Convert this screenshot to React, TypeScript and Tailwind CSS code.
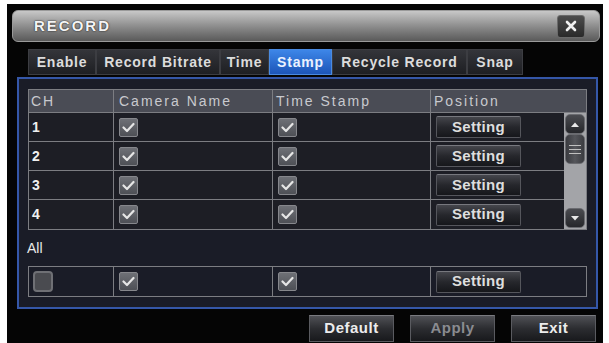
import React from "react";

const font = { fontFamily: '"Liberation Sans", Arial, sans-serif' };

const tabs = ["Enable", "Record Bitrate", "Time", "Stamp", "Recycle Record", "Snap"];
const tabWidths = ["w-[68px]", "w-[124px]", "w-[49px]", "w-[63px]", "w-[135px]", "w-[56px]"];

const Check = ({ on = true }: { on?: boolean }) =>
  on ? (
    <div className="w-[19px] h-[19px] rounded-[2px] border border-[#86878c] bg-gradient-to-b from-[#6e7076] to-[#4e5056] flex items-center justify-center">
      <svg width="13" height="11" viewBox="0 0 13 11">
        <path d="M1.5 5.5 L5 9 L11.5 2" fill="none" stroke="#e6e6e6" strokeWidth="2.2" strokeLinecap="round" strokeLinejoin="round" />
      </svg>
    </div>
  ) : (
    <div className="w-[20px] h-[21px] rounded-[4px] border-2 border-[#6f7075] bg-[#4a4b50]" />
  );

const SettingBtn = () => (
  <div className="w-[85px] h-[22px] rounded-[2px] border border-[#55565c] border-t-[#77787e] bg-gradient-to-b from-[#45464c] via-[#26272c] to-[#16171b] flex items-center justify-center text-[15px] font-bold text-[#dedede] tracking-[0.3px]">
    Setting
  </div>
);

const Arrow = ({ up }: { up?: boolean }) => (
  <div className="w-[20px] h-[20px] rounded-[5px] bg-gradient-to-b from-[#4a4b50] to-[#26272b] border border-[#6a6b70] flex items-center justify-center">
    <svg width="10" height="7" viewBox="0 0 10 7">
      <path d={up ? "M1 6 L5 1.5 L9 6 Z" : "M1 1 L5 5.5 L9 1 Z"} fill="#e8e8e8" />
    </svg>
  </div>
);

const BottomBtn = ({ label, dim }: { label: string; dim?: boolean }) => (
  <div
    className={`w-[85px] h-[27px] border border-[#5a5b60] border-t-[#7a7b80] bg-gradient-to-b from-[#505156] via-[#2c2d31] to-[#18191c] flex items-center justify-center text-[15px] font-bold tracking-[0.5px] ${
      dim ? "text-[#8a8b90]" : "text-[#ececec]"
    }`}
  >
    {label}
  </div>
);

export default function App() {
  return (
    <div className="w-[609px] h-[343px] bg-white pl-[7px] pr-[6px] pt-[4px] overflow-hidden" style={font}>
      <div className="w-[596px] h-[339px] bg-[#050505] flex flex-col">
        {/* Title bar */}
        <div className="mt-[6px] ml-[5px] mr-[3px] h-[32px] rounded-[6px] bg-gradient-to-b from-[#c8c8c8] via-[#8e8e8e] to-[#5a5a5a] border border-[#9a9a9a] flex items-center justify-between pl-[21px] pr-[14px]">
          <span
            className="text-[15px] font-bold tracking-[2px] text-[#f4f4f4]"
            style={{ textShadow: "0 0 1px #222, 0 0 2px #333" }}
          >
            RECORD
          </span>
          <div className="w-[28px] h-[23px] rounded-[3px] bg-gradient-to-b from-[#4c4c4c] to-[#2a2a2a] border border-[#6a6a6a] flex items-center justify-center">
            <svg width="12" height="12" viewBox="0 0 12 12">
              <path d="M2 2 L10 10 M10 2 L2 10" stroke="#f0f0f0" strokeWidth="2.6" strokeLinecap="round" />
            </svg>
          </div>
        </div>

        {/* Tabs */}
        <div className="mt-[7px] ml-[21px] flex h-[26px]">
          {tabs.map((t, i) => (
            <div
              key={t}
              className={`${tabWidths[i]} h-full flex items-center justify-center text-[14px] font-bold tracking-[0.8px] border border-[#3c3d42] ${
                t === "Stamp"
                  ? "bg-gradient-to-b from-[#3d86e8] to-[#1d55b8] text-[#eaf2ff] border-[#4a8ae0]"
                  : "bg-gradient-to-b from-[#34353a] to-[#1e1f23] text-[#dcdcdc]"
              }`}
            >
              {t}
            </div>
          ))}
        </div>

        {/* Panel */}
        <div className="mt-[2px] ml-[10px] mr-[5px] h-[232px] border-2 border-[#3557a8] bg-[#1a1c27] pl-[9px] pt-[10px]">
          <div className="w-[559px] border border-[#7c7d82]">
            {/* Header */}
            <div className="flex h-[23px] bg-[#4a4c55] text-[14px] tracking-[2px] text-[#c8c9ce] border-b border-[#7c7d82]">
              <div className="w-[85px] pl-[2px] flex items-center border-r border-[#7c7d82]">CH</div>
              <div className="w-[159px] pl-[5px] flex items-center border-r border-[#7c7d82]">Camera Name</div>
              <div className="w-[158px] pl-[3px] flex items-center border-r border-[#7c7d82]">Time Stamp</div>
              <div className="flex-1 pl-[3px] flex items-center">Position</div>
            </div>
            {/* Body */}
            <div className="flex">
              <div className="w-[535px]">
                {[1, 2, 3, 4].map((n) => (
                  <div key={n} className={`flex h-[29px] bg-[#1d1e25] ${n < 4 ? "border-b border-[#7c7d82]" : ""}`}>
                    <div className="w-[85px] pl-[3px] flex items-center border-r border-[#7c7d82] text-[14px] font-bold text-[#f0f0f0]">
                      {n}
                    </div>
                    <div className="w-[159px] pl-[5px] flex items-center border-r border-[#7c7d82]">
                      <Check />
                    </div>
                    <div className="w-[158px] pl-[5px] flex items-center border-r border-[#7c7d82]">
                      <Check />
                    </div>
                    <div className="flex-1 pl-[5px] flex items-center">
                      <SettingBtn />
                    </div>
                  </div>
                ))}
              </div>
              {/* Scrollbar */}
              <div className="w-[22px] bg-[#a3a4a8] flex flex-col justify-between items-center py-[1px]">
                <div className="flex flex-col items-center">
                  <Arrow up />
                  <div className="w-[20px] h-[30px] rounded-[5px] bg-gradient-to-r from-[#3a3b40] via-[#55565b] to-[#3a3b40] border border-[#6a6b70] flex flex-col items-center justify-center gap-[3px]">
                    <div className="w-[12px] h-[1px] bg-[#c0c0c0]" />
                    <div className="w-[12px] h-[1px] bg-[#c0c0c0]" />
                    <div className="w-[12px] h-[1px] bg-[#c0c0c0]" />
                  </div>
                </div>
                <Arrow />
              </div>
            </div>
          </div>

          <div className="mt-[11px] ml-[-1px] text-[14px] text-[#e8e8e8] leading-none">All</div>

          <div className="mt-[11px] w-[559px] h-[31px] border border-[#7c7d82] flex">
            <div className="w-[85px] pl-[4px] flex items-center border-r border-[#7c7d82]">
              <Check on={false} />
            </div>
            <div className="w-[159px] pl-[5px] flex items-center border-r border-[#7c7d82]">
              <Check />
            </div>
            <div className="w-[158px] pl-[5px] flex items-center border-r border-[#7c7d82]">
              <Check />
            </div>
            <div className="flex-1 pl-[5px] flex items-center">
              <SettingBtn />
            </div>
          </div>
        </div>

        {/* Bottom buttons */}
        <div className="mt-[6px] flex justify-end gap-[16px] pr-[7px]">
          <BottomBtn label="Default" />
          <BottomBtn label="Apply" dim />
          <BottomBtn label="Exit" />
        </div>
      </div>
    </div>
  );
}
